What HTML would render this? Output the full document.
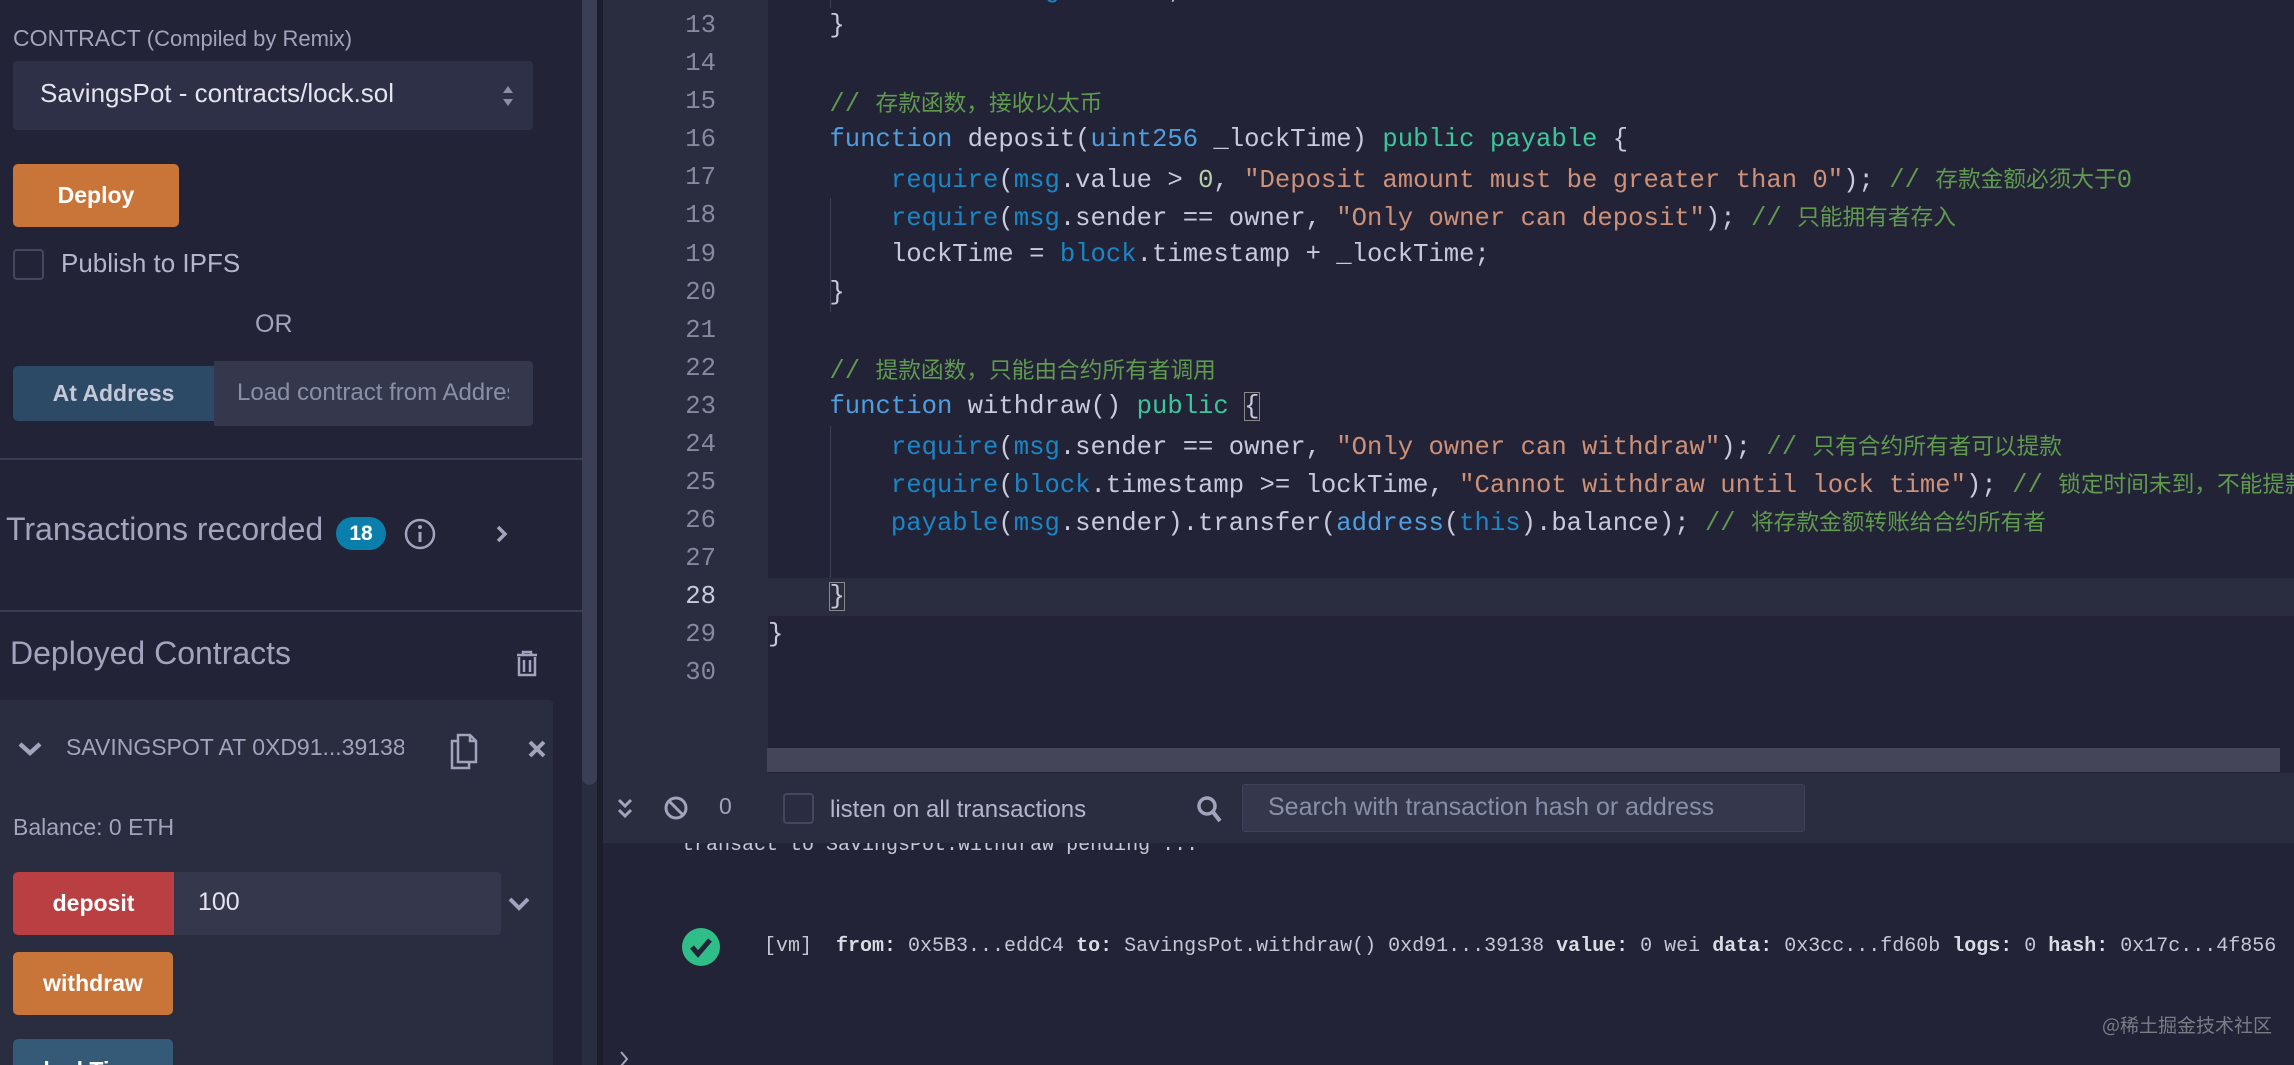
<!DOCTYPE html>
<html><head><meta charset="utf-8">
<style>
*{margin:0;padding:0;box-sizing:border-box}
html,body{width:2294px;height:1065px;overflow:hidden;background:#222336}
#root{position:relative;width:2294px;height:1065px;overflow:hidden;background:#222336;font-family:"Liberation Sans","Noto Sans CJK SC",sans-serif}
.a{position:absolute}
.lp{color:#a2a3bd}
.btn{position:absolute;border-radius:5px;color:#fff;font-weight:bold;font-size:22px;display:flex;align-items:center;justify-content:center}
.code{position:absolute;left:768px;font-family:"Liberation Mono",monospace;font-size:25.6px;color:#c8cadb;white-space:pre;line-height:38px;height:38px}
.ln{position:absolute;width:120px;left:596px;text-align:right;font-family:"Liberation Mono",monospace;font-size:25.6px;color:#858a9e;line-height:38px}
.k{color:#4f9fe0}.g{color:#3cc79b}.b{color:#1a86c6}.s{color:#ce9178}.c{color:#5f9a4f}.n{color:#b5cea8}
.cj{font-family:"Noto Sans CJK SC",sans-serif;font-size:22.7px}
.log{font-family:"Liberation Mono",monospace;font-size:20px;color:#c5c7d4;white-space:pre}
.log b{color:#d8dae4}
</style></head><body><div id="root">

<!-- left panel -->
<div class="a lp" style="left:13px;top:25px;font-size:23px">CONTRACT <span style="font-size:22px">(Compiled by Remix)</span></div>
<div class="a" style="left:13px;top:61px;width:520px;height:69px;background:#2e3047;border-radius:4px"></div>
<div class="a" style="left:40px;top:78px;font-size:26px;color:#e4e4ee">SavingsPot - contracts/lock.sol</div>
<svg class="a" style="left:500px;top:82px" width="16" height="28"><path d="M3 11 L8 4 L13 11Z M3 17 L8 24 L13 17Z" fill="#8a8fa8"/></svg>
<div class="btn" style="left:13px;top:164px;width:166px;height:63px;background:#c97539;font-size:23px">Deploy</div>
<div class="a" style="left:13px;top:249px;width:31px;height:31px;border:2px solid #44475e;border-radius:4px"></div>
<div class="a" style="left:61px;top:248px;font-size:26px;color:#b4b6cc">Publish to IPFS</div>
<div class="a lp" style="left:255px;top:310px;font-size:25px">OR</div>
<div class="btn" style="left:13px;top:366px;width:201px;height:55px;background:#2c4a65;color:#c4c8d8;border-radius:5px 0 0 5px;font-size:23px">At Address</div>
<div class="a" style="left:214px;top:361px;width:319px;height:65px;background:#35374d;border-radius:0 4px 4px 0;overflow:hidden">
 <div style="position:absolute;left:23px;top:18px;font-size:24px;color:#8a8fa8;white-space:nowrap;width:272px;overflow:hidden">Load contract from Address</div></div>
<div class="a" style="left:0;top:458px;width:582px;height:2px;background:#3a3d52"></div>
<div class="a lp" style="left:6px;top:511px;font-size:32px;white-space:nowrap">Transactions recorded</div>
<div class="a" style="left:336px;top:517px;width:50px;height:33px;border-radius:17px;background:#0b7fab;color:#fff;font-weight:bold;font-size:21px;text-align:center;line-height:33px">18</div>
<svg class="a" style="left:403px;top:517px" width="34" height="34"><circle cx="17" cy="17" r="14" fill="none" stroke="#a2a3bd" stroke-width="2.5"/><circle cx="17" cy="10" r="2" fill="#a2a3bd"/><path d="M17 15 V25" stroke="#a2a3bd" stroke-width="3"/></svg>
<svg class="a" style="left:494px;top:522px" width="16" height="24"><path d="M4 5 L11 12 L4 19" fill="none" stroke="#a2a3bd" stroke-width="3.5"/></svg>
<div class="a" style="left:0;top:610px;width:582px;height:2px;background:#3a3d52"></div>
<div class="a lp" style="left:10px;top:635px;font-size:32px">Deployed Contracts</div>
<svg class="a" style="left:515px;top:650px" width="24" height="28"><path d="M2 5 H22 M8 5 V2 H16 V5 M4 7 V25 H20 V7 M9 10 V22 M15 10 V22" fill="none" stroke="#a2a3bd" stroke-width="2.5"/></svg>
<div class="a" style="left:0;top:700px;width:553px;height:365px;background:#2a2c3f;border-radius:0 4px 0 0"></div>
<svg class="a" style="left:17px;top:740px" width="26" height="18"><path d="M3 4 L13 13 L23 4" fill="none" stroke="#a2a3bd" stroke-width="4.5"/></svg>
<div class="a lp" style="left:66px;top:734px;font-size:23px;white-space:nowrap;width:338px;overflow:hidden">SAVINGSPOT AT 0XD91...39138 (MEMORY)</div>
<svg class="a" style="left:449px;top:733px" width="30" height="38"><path d="M8 8 H3 V35 H20 V30 M9 2 H21 L27 8 V29 H9Z M21 2 V8 H27" fill="none" stroke="#a2a3bd" stroke-width="2.5"/></svg>
<svg class="a" style="left:526px;top:738px" width="22" height="22"><path d="M4 4 L18 18 M18 4 L4 18" stroke="#a2a3bd" stroke-width="4"/></svg>
<div class="a lp" style="left:13px;top:814px;font-size:23px">Balance: 0 ETH</div>
<div class="btn" style="left:13px;top:872px;width:161px;height:63px;background:#b93f43;border-radius:5px 0 0 5px;font-size:23px">deposit</div>
<div class="a" style="left:174px;top:872px;width:327px;height:63px;background:#35374d;border-radius:0 4px 4px 0"></div>
<div class="a" style="left:198px;top:888px;font-size:25px;color:#e4e4ee">100</div>
<svg class="a" style="left:507px;top:896px" width="24" height="16"><path d="M3 3 L12 12 L21 3" fill="none" stroke="#a2a3bd" stroke-width="4"/></svg>
<div class="btn" style="left:13px;top:952px;width:160px;height:63px;background:#c97539;font-size:23px">withdraw</div>
<div class="a" style="left:13px;top:1039px;width:160px;height:40px;background:#345a78;border-radius:5px 5px 0 0;overflow:hidden"><div style="position:absolute;left:0;width:160px;top:18px;text-align:center;color:#fff;font-weight:bold;font-size:23px">lockTime</div></div>

<!-- left scrollbar -->
<div class="a" style="left:582px;top:0;width:15px;height:1065px;background:#2a2c3f"></div>
<div class="a" style="left:582px;top:0;width:15px;height:785px;background:#3b3e55;border-radius:0 0 8px 8px"></div>
<div class="a" style="left:597px;top:0;width:6px;height:1065px;background:#1c1d2c"></div>

<!-- editor -->
<div class="a" style="left:603px;top:0;width:165px;height:773px;background:#2a2c3f"></div>
<div class="a" style="left:767px;top:578px;width:1527px;height:38px;background:#2a2c3f"></div>
<div class="a" style="left:830px;top:198px;width:1px;height:114px;background:#3e4156"></div>
<div class="a" style="left:830px;top:426px;width:1px;height:152px;background:#3e4156"></div>
<div class="a" style="left:830px;top:-10px;width:1px;height:18px;background:#3e4156"></div>

<div class="ln" style="top:7px">13</div><div class="ln" style="top:45px">14</div><div class="ln" style="top:83px">15</div><div class="ln" style="top:121px">16</div><div class="ln" style="top:159px">17</div><div class="ln" style="top:197px">18</div><div class="ln" style="top:236px">19</div><div class="ln" style="top:274px">20</div><div class="ln" style="top:312px">21</div><div class="ln" style="top:350px">22</div><div class="ln" style="top:388px">23</div><div class="ln" style="top:426px">24</div><div class="ln" style="top:464px">25</div><div class="ln" style="top:502px">26</div><div class="ln" style="top:540px">27</div><div class="ln" style="top:578px;color:#c8cadb">28</div><div class="ln" style="top:616px">29</div><div class="ln" style="top:654px">30</div>

<div class="code" style="top:-31px">        owner = <span class="b">msg</span>.sender; <span class="c">// <span class="cj">设置合约所有者</span></span></div>
<div class="code" style="top:7px">    }</div>
<div class="code" style="top:83px"><span class="c">    // <span class="cj">存款函数，接收以太币</span></span></div>
<div class="code" style="top:121px">    <span class="k">function</span> deposit(<span class="k">uint256</span> _lockTime) <span class="g">public</span> <span class="g">payable</span> {</div>
<div class="code" style="top:159px">        <span class="b">require</span>(<span class="b">msg</span>.value &gt; <span class="n">0</span>, <span class="s">"Deposit amount must be greater than 0"</span>); <span class="c">// <span class="cj">存款金额必须大于</span>0</span></div>
<div class="code" style="top:197px">        <span class="b">require</span>(<span class="b">msg</span>.sender == owner, <span class="s">"Only owner can deposit"</span>); <span class="c">// <span class="cj">只能拥有者存入</span></span></div>
<div class="code" style="top:236px">        lockTime = <span class="b">block</span>.timestamp + _lockTime;</div>
<div class="code" style="top:274px">    }</div>
<div class="code" style="top:350px"><span class="c">    // <span class="cj">提款函数，只能由合约所有者调用</span></span></div>
<div class="code" style="top:388px">    <span class="k">function</span> withdraw() <span class="g">public</span> <span style="outline:1px solid #888;outline-offset:-1px">{</span></div>
<div class="code" style="top:426px">        <span class="b">require</span>(<span class="b">msg</span>.sender == owner, <span class="s">"Only owner can withdraw"</span>); <span class="c">// <span class="cj">只有合约所有者可以提款</span></span></div>
<div class="code" style="top:464px">        <span class="b">require</span>(<span class="b">block</span>.timestamp &gt;= lockTime, <span class="s">"Cannot withdraw until lock time"</span>); <span class="c">// <span class="cj">锁定时间未到，不能提款</span></span></div>
<div class="code" style="top:502px">        <span class="b">payable</span>(<span class="b">msg</span>.sender).transfer(<span class="k">address</span>(<span class="b">this</span>).balance); <span class="c">// <span class="cj">将存款金额转账给合约所有者</span></span></div>
<div class="code" style="top:578px">    <span style="outline:1px solid #888;outline-offset:-1px">}</span></div>
<div class="code" style="top:616px">}</div>

<div class="a" style="left:767px;top:748px;width:1513px;height:24px;background:#45455a"></div>

<!-- terminal toolbar -->
<div class="a" style="left:603px;top:773px;width:1691px;height:70px;background:#2a2c3f"></div>
<svg class="a" style="left:614px;top:797px" width="22" height="26"><path d="M5 3 L11 9 L17 3 M5 13 L11 19 L17 13" fill="none" stroke="#a2a3bd" stroke-width="3"/></svg>
<svg class="a" style="left:663px;top:795px" width="26" height="26"><circle cx="13" cy="13" r="10" fill="none" stroke="#a2a3bd" stroke-width="3"/><path d="M6 6 L20 20" stroke="#a2a3bd" stroke-width="3"/></svg>
<div class="a lp" style="left:719px;top:793px;font-size:23px">0</div>
<div class="a" style="left:783px;top:793px;width:31px;height:31px;border:2px solid #44475e;border-radius:4px"></div>
<div class="a" style="left:830px;top:796px;font-size:24px;color:#b4b6cc">listen on all transactions</div>
<svg class="a" style="left:1196px;top:795px" width="28" height="30"><circle cx="11" cy="11" r="8" fill="none" stroke="#a2a3bd" stroke-width="3.5"/><path d="M17 17 L24 26" stroke="#a2a3bd" stroke-width="4"/></svg>
<div class="a" style="left:1242px;top:784px;width:563px;height:48px;background:#35374d;border-radius:3px;border:1px solid #3f4259"></div>
<div class="a" style="left:1268px;top:793px;font-size:25px;color:#8a8fa8">Search with transaction hash or address</div>

<!-- terminal content -->
<div class="a" style="left:603px;top:843px;width:1691px;height:222px;overflow:hidden">
 <div class="a log" style="left:79px;top:-9px">transact to SavingsPot.withdraw pending ...</div>
</div>
<svg class="a" style="left:682px;top:928px" width="38" height="38"><circle cx="19" cy="19" r="19" fill="#2fbe87"/><path d="M10 19 L16 26 L28 12" fill="none" stroke="#222336" stroke-width="5"/></svg>
<div class="a log" style="left:764px;top:935px">[vm]  <b>from:</b> 0x5B3...eddC4 <b>to:</b> SavingsPot.withdraw() 0xd91...39138 <b>value:</b> 0 wei <b>data:</b> 0x3cc...fd60b <b>logs:</b> 0 <b>hash:</b> 0x17c...4f856</div>
<div class="a" style="left:2102px;top:1011px;font-size:19px;color:#7a7c88;font-family:'Noto Sans CJK SC',sans-serif">@稀土掘金技术社区</div>
<svg class="a" style="left:618px;top:1050px" width="14" height="15"><path d="M3 2 L9 9 L3 16" fill="none" stroke="#a2a3bd" stroke-width="2"/></svg>
</div></body></html>
